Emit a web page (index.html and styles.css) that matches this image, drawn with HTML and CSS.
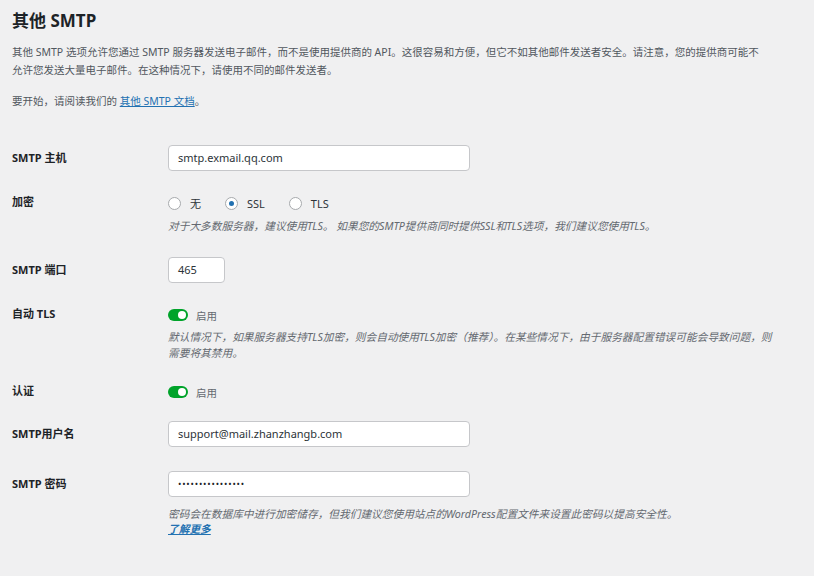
FILE: index.html
```html
<!DOCTYPE html>
<html lang="zh-CN">
<head>
<meta charset="utf-8">
<link rel="stylesheet" href="styles.css">
</head>
<body>
<div class="page">
  <h1 class="title">其他 SMTP</h1>
  <p class="intro">其他 SMTP 选项允许您通过 SMTP 服务器发送电子邮件，而不是使用提供商的 API。这很容易和方便，但它不如其他邮件发送者安全。请注意，您的提供商可能不允许您发送大量电子邮件。在这种情况下，请使用不同的邮件发送者。</p>
  <p class="intro start">要开始，请阅读我们的 <a class="link" href="#">其他 SMTP 文档</a>。</p>

  <div class="form">
    <div class="row r-host">
      <div class="label lbl-input">SMTP 主机</div>
      <div class="field"><div class="input wide">smtp.exmail.qq.com</div></div>
    </div>

    <div class="row r-enc">
      <div class="label lbl-line">加密</div>
      <div class="field">
        <div class="radios">
          <span class="radio"><span class="circle"></span><span class="rtext">无</span></span>
          <span class="radio"><span class="circle checked"></span><span class="rtext">SSL</span></span>
          <span class="radio"><span class="circle"></span><span class="rtext">TLS</span></span>
        </div>
        <p class="desc">对于大多数服务器，建议使用TLS。 如果您的SMTP提供商同时提供SSL和TLS选项，我们建议您使用TLS。</p>
      </div>
    </div>

    <div class="row r-port">
      <div class="label lbl-input">SMTP 端口</div>
      <div class="field"><div class="input narrow">465</div></div>
    </div>

    <div class="row r-auto">
      <div class="label lbl-line">自动 TLS</div>
      <div class="field">
        <div class="toggle-line"><span class="toggle"><span class="knob"></span></span><span class="ttext">启用</span></div>
        <p class="desc">默认情况下，如果服务器支持TLS加密，则会自动使用TLS加密（推荐）。在某些情况下，由于服务器配置错误可能会导致问题，则需要将其禁用。</p>
      </div>
    </div>

    <div class="row r-auth">
      <div class="label lbl-line">认证</div>
      <div class="field">
        <div class="toggle-line"><span class="toggle"><span class="knob"></span></span><span class="ttext">启用</span></div>
      </div>
    </div>

    <div class="row r-user">
      <div class="label lbl-input">SMTP用户名</div>
      <div class="field"><div class="input wide">support@mail.zhanzhangb.com</div></div>
    </div>

    <div class="row r-pass">
      <div class="label lbl-input">SMTP 密码</div>
      <div class="field">
        <div class="input wide dots">••••••••••••••••</div>
        <p class="desc pass-desc">密码会在数据库中进行加密储存，但我们建议您使用站点的WordPress配置文件来设置此密码以提高安全性。<br><a class="more" href="#">了解更多</a></p>
      </div>
    </div>
  </div>
</div>
</body>
</html>
```

FILE: styles.css
```css
html, body {
  margin: 0;
  padding: 0;
  background: #f0f0f1;
}
body {
  font-family: "Noto Sans", "Noto Sans CJK SC", sans-serif;
  color: #3c434a;
  font-size: 11px;
  width: 814px;
  height: 576px;
  overflow: hidden;
}
.page {
  padding: 10px 0 0 12px;
  width: 770px;
}
.title {
  margin: 0;
  font-size: 17px;
  line-height: 22px;
  font-weight: 700;
  color: #1d2327;
}
.intro {
  margin: 11px 0 0 0;
  line-height: 18px;
  font-size: 10.5px;
  color: #50575e;
  width: 757px;
}
.intro.start {
  margin-top: 13px;
}
.link {
  color: #2271b1;
  text-decoration: underline;
}
.form {
  margin-top: 35px;
}
.row {
  display: flex;
  align-items: flex-start;
}
.r-enc { margin-top: 23px; }
.r-port { margin-top: 23px; }
.r-auto { margin-top: 23px; }
.r-auth { margin-top: 22px; }
.r-user { margin-top: 20px; }
.r-pass { margin-top: 24px; }
.label {
  width: 156px;
  flex: none;
  font-weight: 700;
  color: #1d2327;
  font-size: 11px;
}
.lbl-input { line-height: 26px; }
.lbl-line { line-height: 16px; }
.field {
  flex: 1;
}
.input {
  box-sizing: border-box;
  height: 26px;
  line-height: 24px;
  background: #fff;
  border: 1px solid #c6c7ca;
  border-radius: 4px;
  padding: 0 9px;
  color: #2c3338;
  font-size: 11px;
}
.input.wide { width: 302px; }
.input.narrow { width: 57px; }
.input.dots {
  font-size: 9px;
  letter-spacing: 0.8px;
  color: #1d2327;
}
.radios {
  display: flex;
  align-items: center;
  height: 18px;
}
.radio {
  display: flex;
  align-items: center;
  margin-right: 24px;
}
.circle {
  box-sizing: border-box;
  width: 13px;
  height: 13px;
  border-radius: 50%;
  border: 1px solid #a7aaad;
  background: #fff;
  display: flex;
  align-items: center;
  justify-content: center;
}
.circle.checked::after {
  content: "";
  width: 5px;
  height: 5px;
  border-radius: 50%;
  background: #2271b1;
}
.rtext {
  margin-left: 9px;
  color: #2c3338;
  font-size: 11px;
}
.desc {
  margin: 6px 0 0 0;
  font-style: italic;
  color: #646970;
  font-size: 10.7px;
  line-height: 16px;
  width: 606px;
}
.r-auto .desc { margin-top: 5px; }
.pass-desc {
  margin-top: 10px;
  line-height: 15px;
}
.more {
  color: #2271b1;
  font-weight: 700;
  text-decoration: underline;
}
.toggle-line {
  display: flex;
  align-items: center;
  height: 18px;
}
.toggle {
  box-sizing: border-box;
  width: 20px;
  height: 12px;
  border-radius: 6px;
  background: #00a32a;
  display: flex;
  align-items: center;
  justify-content: flex-end;
  padding-right: 2px;
}
.knob {
  width: 8px;
  height: 8px;
  border-radius: 50%;
  background: #fff;
}
.ttext {
  margin-left: 8px;
  color: #646970;
  font-size: 10.5px;
}
```
